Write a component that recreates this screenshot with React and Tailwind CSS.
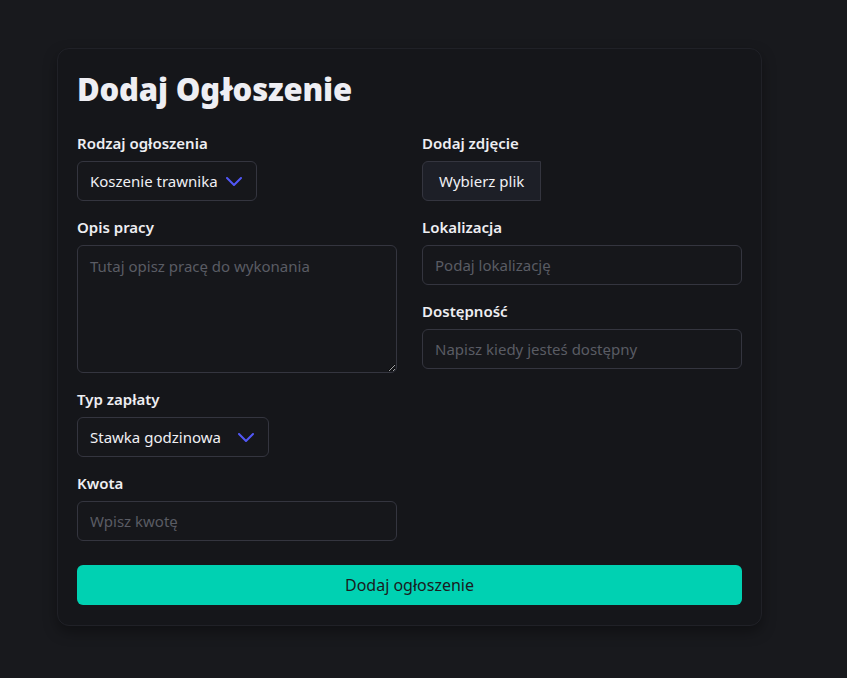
import React from 'react';

const Label = ({ children }) => (
  <label className="block text-[15px] font-semibold text-[#eeeef2] mb-2 leading-5">{children}</label>
);

const Chevron = () => (
  <svg width="16" height="9" viewBox="0 0 16 9" fill="none" stroke="#5157f6" strokeWidth="2" strokeLinecap="round" strokeLinejoin="round">
    <polyline points="1,1 8,8 15,1" />
  </svg>
);

const Select = ({ value, width }) => (
  <div className={`flex items-center justify-between h-10 ${width} pl-3 pr-[14px] rounded-md border border-[#34353f] bg-[#16171b] text-[15px] text-[#f0f0f4]`}>
    <span>{value}</span>
    <Chevron />
  </div>
);

const Input = ({ placeholder }) => (
  <input
    type="text"
    placeholder={placeholder}
    className="block w-full h-10 px-3 rounded-md border border-[#34353f] bg-[#16171b] text-[15px] text-white placeholder:text-[#5a5c64] outline-none"
  />
);

export default function App() {
  return (
    <div className="min-h-screen bg-[#18191d] pt-12 pl-[57px]" style={{ fontFamily: '"Noto Sans", "Open Sans", sans-serif' }}>
      <div className="w-[705px] rounded-xl bg-[#15161a] border border-[#202127] shadow-[0_6px_14px_rgba(0,0,0,0.35)] px-[19px] pt-[22px] pb-5">
        <h1 className="text-[31px] font-black text-[#eeeef3] leading-[36px] mb-[26px] tracking-[-0.2px]">Dodaj Ogłoszenie</h1>

        <div className="grid grid-cols-2 gap-x-[25px]">
          <div className="flex flex-col gap-4">
            <div>
              <Label>Rodzaj ogłoszenia</Label>
              <Select value="Koszenie trawnika" width="w-[180px]" />
            </div>
            <div>
              <Label>Opis pracy</Label>
              <textarea
                placeholder="Tutaj opisz pracę do wykonania"
                className="block w-full h-[128px] px-3 py-[9px] rounded-md border border-[#34353f] bg-[#16171b] text-[15px] text-white placeholder:text-[#5a5c64] outline-none resize-y"
              />
            </div>
            <div>
              <Label>Typ zapłaty</Label>
              <Select value="Stawka godzinowa" width="w-[192px]" />
            </div>
            <div>
              <Label>Kwota</Label>
              <Input placeholder="Wpisz kwotę" />
            </div>
          </div>

          <div className="flex flex-col gap-4">
            <div>
              <Label>Dodaj zdjęcie</Label>
              <div className="flex">
                <span className="inline-flex items-center h-10 px-4 rounded-l-md border border-[#34353f] bg-[#1d1f27] text-[15px] text-[#f0f0f4]">Wybierz plik</span>
              </div>
            </div>
            <div>
              <Label>Lokalizacja</Label>
              <Input placeholder="Podaj lokalizację" />
            </div>
            <div>
              <Label>Dostępność</Label>
              <Input placeholder="Napisz kiedy jesteś dostępny" />
            </div>
          </div>
        </div>

        <button className="mt-6 w-full h-10 rounded-md bg-[#00d1b2] text-base text-[#1a1b20]">Dodaj ogłoszenie</button>
      </div>
    </div>
  );
}
